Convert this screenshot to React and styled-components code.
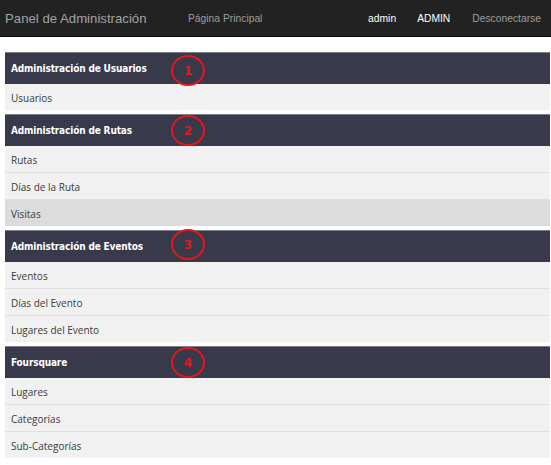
import React from 'react';
import styled, { createGlobalStyle } from 'styled-components';

const GlobalStyle = createGlobalStyle`
    html, body {
        margin: 0;
        padding: 0;
        background: #fff;
    }
`;

const Navbar = styled.nav`
    display: flex;
    align-items: center;
    height: 36px;
    background: #222;
    border-bottom: 1px solid #080808;
    font-family: "Liberation Sans", Arial, sans-serif;
`;

const Brand = styled.div`
    font-size: 13.2px;
    color: #a3a3a3;
    padding-left: 5px;
    width: 183px;
`;

const NavLink = styled.a`
    font-size: 10.3px;
    color: ${(p) => (p.$active ? '#fff' : '#9d9d9d')};
    text-decoration: none;
    margin-right: ${(p) => p.$gap || 0}px;
`;

const Spacer = styled.div`
    flex: 1;
`;

const Content = styled.div`
    display: flex;
    flex-direction: column;
    gap: 4px;
    padding: 15px 1px 0 5px;
`;

const Panel = styled.section`
    position: relative;
    display: flex;
    flex-direction: column;
`;

const Header = styled.div`
    height: 31px;
    display: flex;
    align-items: center;
    padding-left: 6px;
    background: #383a4c;
    border-top: 1px solid #7d7d85;
    color: #fff;
    font-family: "DejaVu Sans Condensed", "DejaVu Sans", Verdana, sans-serif;
    font-stretch: condensed;
    font-weight: bold;
    font-size: 10px;
    letter-spacing: -0.15px;
`;

const Item = styled.div`
    height: 26px;
    display: flex;
    align-items: center;
    padding: 1px 0 0 6px;
    box-sizing: border-box;
    height: 27px;
    background: ${(p) => (p.$selected ? '#dcdcdc' : '#f1f1f1')};
    border-top: 1px solid #e0e0e0;
    color: #3b3b3b;
    font-family: "Open Sans", "Noto Sans", sans-serif;
    font-size: 10px;

    &:first-of-type {
        border-top: none;
        height: 26px;
    }
`;

const Badge = styled.div`
    position: absolute;
    left: 166px;
    top: ${(p) => p.$top}px;
    width: 30px;
    height: 27px;
    border: 2px solid #e3161c;
    border-radius: 50%;
    display: flex;
    align-items: center;
    justify-content: center;
    color: #e3161c;
    font-family: "DejaVu Sans", Verdana, sans-serif;
    font-weight: bold;
    font-size: 12px;
`;

const sections = [
    { title: 'Administración de Usuarios', n: 1, top: 3, items: ['Usuarios'] },
    { title: 'Administración de Rutas', n: 2, top: 1, items: ['Rutas', 'Días de la Ruta', 'Visitas'], selected: 2 },
    { title: 'Administración de Eventos', n: 3, top: -1, items: ['Eventos', 'Días del Evento', 'Lugares del Evento'] },
    { title: 'Foursquare', n: 4, top: 1, items: ['Lugares', 'Categorías', 'Sub-Categorías'] },
];

const App = () => {
    return (
        <>
            <GlobalStyle />
            <Navbar>
                <Brand>Panel de Administración</Brand>
                <NavLink>Página Principal</NavLink>
                <Spacer />
                <NavLink $active $gap={21}>admin</NavLink>
                <NavLink $active $gap={22}>ADMIN</NavLink>
                <NavLink $gap={10}>Desconectarse</NavLink>
            </Navbar>
            <Content>
                {sections.map((s) => (
                    <Panel key={s.n}>
                        <Header>{s.title}</Header>
                        <div>
                            {s.items.map((it, i) => (
                                <Item key={it} $selected={s.selected === i}>{it}</Item>
                            ))}
                        </div>
                        <Badge $top={s.top}>{s.n}</Badge>
                    </Panel>
                ))}
            </Content>
        </>
    );
};

export default App;
